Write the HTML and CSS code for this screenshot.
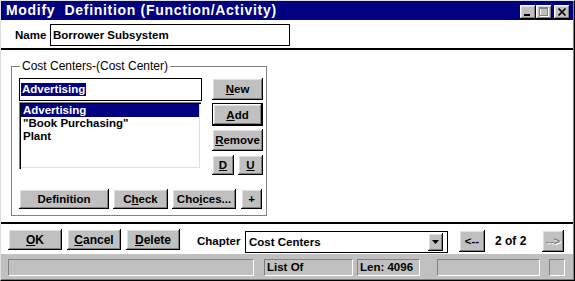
FILE: index.html
```html
<!DOCTYPE html>
<html>
<head>
<meta charset="utf-8">
<link rel="stylesheet" href="styles.css">
</head>
<body>
<div class="window">
  <div class="titlebar">
    <span class="title">Modify  Definition (Function/Activity)</span>
    <div class="tbtns">
      <div class="tbtn"><svg width="16" height="14" viewBox="0 0 16 14"><rect x="4" y="9" width="6" height="2" fill="#000"/></svg></div>
      <div class="tbtn"><svg width="16" height="14" viewBox="0 0 16 14"><rect x="4.5" y="3.5" width="8" height="8" fill="none" stroke="#fff"/><rect x="3.5" y="2.5" width="8" height="8" fill="none" stroke="#808080"/><rect x="3" y="3" width="9" height="1" fill="#808080"/></svg></div>
      <div class="tbtn close"><svg width="16" height="14" viewBox="0 0 16 14"><path d="M4.5 3.5l7 7M11.5 3.5l-7 7" stroke="#000" stroke-width="1.7"/></svg></div>
    </div>
  </div>

  <div class="namerow">
    <span class="namelabel">Name</span>
    <div class="field namefield">Borrower Subsystem</div>
  </div>

  <div class="sep"></div>

  <div class="content">
    <div class="group">
      <span class="legend">Cost Centers-(Cost Center)</span>
      <div class="group-top">
        <div class="leftcol">
          <div class="field entry"><span class="sel">Advertising</span></div>
          <div class="listbox">
            <div class="item selected">Advertising</div>
            <div class="item">"Book Purchasing"</div>
            <div class="item">Plant</div>
          </div>
        </div>
        <div class="rightcol">
          <div class="btn h22"><u>N</u>ew</div>
          <div class="btn default"><u>A</u>dd</div>
          <div class="btn h22"><u>R</u>emove</div>
          <div class="durow">
            <div class="btn w-d"><u>D</u></div>
            <div class="btn w-u"><u>U</u></div>
          </div>
        </div>
      </div>
      <div class="group-bottom">
        <div class="btn w-def">Definition</div>
        <div class="btn w-check">C<u>h</u>eck</div>
        <div class="btn w-choices">Cho<u>i</u>ces...</div>
        <div class="btn w-plus">+</div>
      </div>
    </div>
  </div>

  <div class="sep"></div>

  <div class="actions">
    <div class="btn w-act"><u>O</u>K</div>
    <div class="btn w-act"><u>C</u>ancel</div>
    <div class="btn w-act"><u>D</u>elete</div>
    <span class="chapter">Chapter</span>
    <div class="combo">
      <span class="combo-text">Cost Centers</span>
      <div class="btn combo-btn"><svg width="7" height="4" viewBox="0 0 7 4"><path d="M0 0h7L3.5 4z" fill="#000"/></svg></div>
    </div>
    <div class="btn nav prev">&lt;--</div>
    <span class="pager">2 of 2</span>
    <div class="btn nav disabled">--&gt;</div>
  </div>

  <div class="statusbar">
    <div class="panel p1"></div>
    <div class="panel p2">List Of</div>
    <div class="panel p3">Len: 4096</div>
    <div class="panel p4"></div>
    <div class="panel p5"></div>
  </div>
</div>
</body>
</html>
```

FILE: styles.css
```css
html, body {
  margin: 0;
  padding: 0;
  background: #ffffff;
}

body {
  font-family: "Liberation Sans", Arial, sans-serif;
  font-size: 11.5px;
  font-weight: bold;
  color: #000;
}

.window {
  width: 575px;
  height: 281px;
  box-sizing: border-box;
  border-top: 1px solid #dfdfdf;
  border-left: 1px solid #dfdfdf;
  border-right: 1px solid #000;
  border-bottom: 1px solid #000;
  padding: 0 1px 1px 0;
  box-shadow: inset -1px -1px #808080;
  background: #fff;
  display: flex;
  flex-direction: column;
}

/* title bar */
.titlebar {
  height: 19px;
  flex: none;
  background: #000080;
  color: #fff;
  display: flex;
  align-items: center;
  justify-content: space-between;
  padding: 0 3px 0 5px;
}

.title {
  white-space: pre;
  font-size: 14px;
  letter-spacing: 0.7px;
  line-height: 19px;
}

.tbtns {
  display: flex;
  align-self: flex-end;
  margin-bottom: 1px;
}

.tbtn {
  width: 16px;
  height: 14px;
  background: #c0c0c0;
  box-shadow: inset -1px -1px #000, inset 1px 1px #fff, inset -2px -2px #808080, inset 2px 2px #dfdfdf;
}

.tbtn svg {
  display: block;
}

.tbtn.close {
  margin-left: 2px;
}

/* name row */
.namerow {
  height: 28px;
  flex: none;
  display: flex;
  align-items: flex-start;
  padding: 4px 0 0 14px;
  box-sizing: border-box;
  gap: 4px;
}

.namelabel {
  width: 31px;
  line-height: 22px;
}

.field {
  box-sizing: border-box;
  border: 1px solid #000;
  background: #fff;
  display: flex;
  align-items: center;
}

.namefield {
  width: 240px;
  height: 22px;
  padding-left: 2px;
}

.sep {
  height: 2px;
  flex: none;
  background: #000;
}

/* content */
.content {
  height: 172px;
  flex: none;
}

.group {
  position: relative;
  width: 256px;
  height: 150px;
  box-sizing: border-box;
  border: 1px solid #808080;
  margin: 16px 0 0 10px;
  padding: 11px 0 0 7px;
}

.legend {
  position: absolute;
  top: -8px;
  left: 8px;
  padding: 0 2px;
  background: #fff;
  font-size: 12px;
  font-weight: normal;
  line-height: 14px;
}

.group-top {
  display: flex;
  gap: 10px;
  height: 97px;
}

.leftcol {
  width: 183px;
  display: flex;
  flex-direction: column;
  gap: 1px;
}

.entry {
  height: 23px;
  padding-left: 1px;
}

.sel {
  background: #000080;
  color: #fff;
  padding: 0 1px;
  line-height: 13px;
}

.listbox {
  width: 182px;
  height: 67px;
  box-sizing: border-box;
  padding: 2px;
  box-shadow: inset 1px 1px #808080, inset 2px 2px #000, inset -1px -1px #fff, inset -2px -2px #dfdfdf;
}

.item {
  height: 13px;
  line-height: 13px;
  padding-left: 2px;
  white-space: nowrap;
}

.item.selected {
  background: #000080;
  color: #fff;
}

.rightcol {
  width: 51px;
  display: flex;
  flex-direction: column;
  gap: 3px;
}

.btn {
  box-sizing: border-box;
  display: flex;
  align-items: center;
  justify-content: center;
  background: #c0c0c0;
  box-shadow: inset -1px -1px #000, inset 1px 1px #fff, inset -2px -2px #808080, inset 2px 2px #dfdfdf;
  white-space: nowrap;
  flex: none;
}

.btn u {
  text-decoration-thickness: 1px;
  text-underline-offset: 1px;
}

.h22 {
  height: 22px;
}

.btn.default {
  height: 23px;
  border: 1px solid #000;
}

.durow {
  display: flex;
  gap: 4px;
  height: 20px;
  margin-top: 1px;
}

.w-d {
  width: 22px;
}

.w-u {
  width: 25px;
}

.group-bottom {
  display: flex;
  gap: 4px;
  margin-top: 14px;
  height: 20px;
}

.w-def {
  width: 90px;
}

.w-check {
  width: 55px;
}

.w-choices {
  width: 64px;
}

.w-plus {
  width: 21px;
  margin-left: 1px;
}

/* actions */
.actions {
  height: 30px;
  flex: none;
  box-sizing: border-box;
  display: flex;
  align-items: flex-start;
  gap: 5px;
  padding: 5px 0 0 7px;
  font-size: 11.5px;
}

.w-act {
  width: 54px;
  height: 21px;
  font-size: 12px;
}

.chapter {
  margin-left: 12px;
  margin-top: 2px;
  line-height: 21px;
  width: 43px;
}

.combo {
  width: 203px;
  height: 22px;
  margin-top: 2px;
  box-sizing: border-box;
  border: 1px solid #000;
  display: flex;
  align-items: center;
  justify-content: space-between;
  padding: 0 4px 0 3px;
}

.combo-btn {
  width: 15px;
  height: 18px;
}

.combo-btn svg {
  display: block;
}

.nav {
  height: 22px;
  margin-top: 1px;
}

.prev {
  width: 26px;
  margin-left: 6px;
}

.pager {
  width: 42px;
  margin-left: 5px;
  line-height: 22px;
  margin-top: 1px;
  font-size: 12px;
}

.nav.disabled {
  width: 22px;
  color: #808080;
  text-shadow: 1px 1px #fff;
}

/* status bar */
.statusbar {
  flex: 1;
  background: #c0c0c0;
  display: flex;
  align-items: flex-start;
  padding: 5px 0 0 7px;
  box-sizing: border-box;
}

.panel {
  height: 17px;
  box-sizing: border-box;
  border-top: 1px solid #808080;
  border-left: 1px solid #808080;
  border-bottom: 1px solid #fff;
  border-right: 1px solid #fff;
  padding-left: 2px;
  line-height: 15px;
  white-space: nowrap;
}

.p1 { width: 246px; }
.p2 { width: 89px; margin-left: 10px; }
.p3 { width: 63px; margin-left: 4px; }
.p4 { width: 103px; margin-left: 17px; }
.p5 { width: 16px; margin-left: 9px; }
```
